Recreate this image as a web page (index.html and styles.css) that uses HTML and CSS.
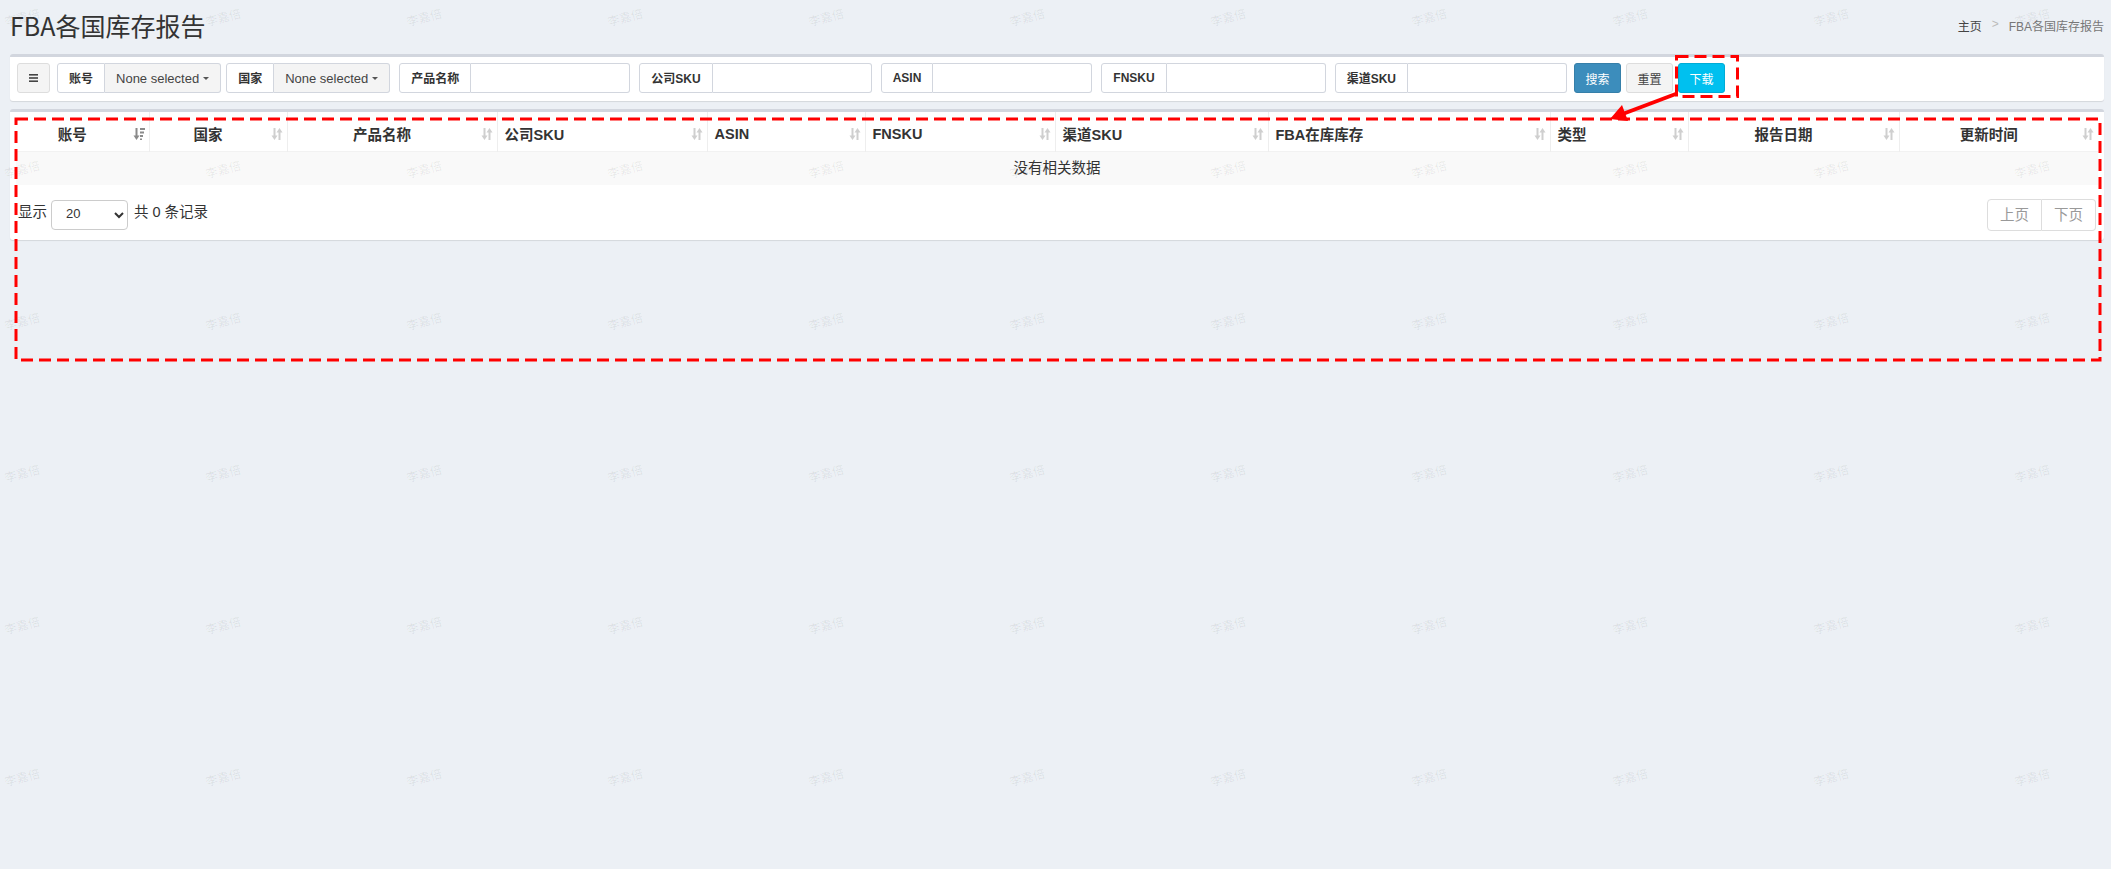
FILE: index.html
```html
<!DOCTYPE html>
<html lang="zh-CN">
<head>
    <meta charset="UTF-8">
    <meta name="viewport" content="width=device-width, initial-scale=1.0">
    <title>FBA各国库存报告</title>
    <link rel="stylesheet" href="styles.css">
</head>
<body>

<svg class="defs" width="0" height="0">
    <symbol id="sort" viewBox="0 0 12 14">
        <rect x="2.5" y="1" width="2" height="8"/>
        <polygon points="0.5,8.5 6.5,8.5 3.5,13"/>
        <polygon points="5.5,5.5 11.5,5.5 8.5,1"/>
        <rect x="7.5" y="5" width="2" height="8"/>
    </symbol>
    <symbol id="sort-desc" viewBox="0 0 12 14">
        <rect x="2.5" y="1" width="2" height="8"/>
        <polygon points="0.5,8.5 6.5,8.5 3.5,13"/>
        <rect x="7" y="1" width="5" height="2"/>
        <rect x="7" y="4.5" width="4" height="2"/>
        <rect x="7" y="8" width="3" height="2"/>
        <rect x="7" y="11.5" width="2" height="1.5"/>
    </symbol>
</svg>

<div class="page-header">
    <h1>FBA各国库存报告</h1>
    <ol class="breadcrumb">
        <li class="home">主页</li>
        <li class="sep">&gt;</li>
        <li>FBA各国库存报告</li>
    </ol>
</div>

<section class="content">
    <div class="box toolbar">
        <button class="btn btn-default btn-menu">
            <svg width="9" height="8" viewBox="0 0 9 8"><rect y="0" width="9" height="1.6"/><rect y="3.2" width="9" height="1.6"/><rect y="6.4" width="9" height="1.6"/></svg>
        </button>
        <div class="input-group">
            <span class="addon">账号</span>
            <button class="dropdown">None selected <span class="caret"></span></button>
        </div>
        <div class="input-group">
            <span class="addon">国家</span>
            <button class="dropdown">None selected <span class="caret"></span></button>
        </div>
        <div class="input-group text">
            <span class="addon">产品名称</span>
            <input type="text">
        </div>
        <div class="input-group text">
            <span class="addon">公司SKU</span>
            <input type="text">
        </div>
        <div class="input-group text">
            <span class="addon">ASIN</span>
            <input type="text">
        </div>
        <div class="input-group text">
            <span class="addon">FNSKU</span>
            <input type="text">
        </div>
        <div class="input-group text">
            <span class="addon">渠道SKU</span>
            <input type="text">
        </div>
        <button class="btn btn-primary">搜索</button>
        <button class="btn btn-default">重置</button>
        <button class="btn btn-info">下载</button>
    </div>

    <div class="box table-box">
        <table class="report">
            <colgroup>
                <col style="width:133px"><col style="width:138px"><col style="width:210px"><col style="width:210px">
                <col style="width:158px"><col style="width:190px"><col style="width:213px"><col style="width:282px">
                <col style="width:138px"><col style="width:211px"><col style="width:199px">
            </colgroup>
            <thead>
                <tr>
                    <th class="center"><div class="th-inner"><span>账号</span><svg class="active"><use href="#sort-desc"/></svg></div></th>
                    <th class="center"><div class="th-inner"><span>国家</span><svg><use href="#sort"/></svg></div></th>
                    <th class="center"><div class="th-inner"><span>产品名称</span><svg><use href="#sort"/></svg></div></th>
                    <th class="left"><div class="th-inner"><span>公司SKU</span><svg><use href="#sort"/></svg></div></th>
                    <th class="left"><div class="th-inner"><span>ASIN</span><svg><use href="#sort"/></svg></div></th>
                    <th class="left"><div class="th-inner"><span>FNSKU</span><svg><use href="#sort"/></svg></div></th>
                    <th class="left"><div class="th-inner"><span>渠道SKU</span><svg><use href="#sort"/></svg></div></th>
                    <th class="left"><div class="th-inner"><span>FBA在库库存</span><svg><use href="#sort"/></svg></div></th>
                    <th class="left"><div class="th-inner"><span>类型</span><svg><use href="#sort"/></svg></div></th>
                    <th class="center"><div class="th-inner"><span>报告日期</span><svg><use href="#sort"/></svg></div></th>
                    <th class="center"><div class="th-inner"><span>更新时间</span><svg><use href="#sort"/></svg></div></th>
                </tr>
            </thead>
            <tbody>
                <tr class="no-records">
                    <td colspan="11">没有相关数据</td>
                </tr>
            </tbody>
        </table>

        <div class="pager">
            <div class="page-size">
                <span>显示</span>
                <select>
                    <option>20</option>
                    <option>50</option>
                    <option>100</option>
                </select>
                <span>共 0 条记录</span>
            </div>
            <div class="pagination">
                <a>上页</a>
                <a>下页</a>
            </div>
        </div>
    </div>
</section>

<div class="watermark"><div class="wm-grid" id="watermark"></div></div>

<svg class="annotate" width="2111" height="400" viewBox="0 0 2111 400">
    <rect x="16" y="119" width="2084" height="241" class="mark"/>
    <rect x="1676.5" y="56.5" width="61" height="40" class="mark"/>
    <line x1="1677" y1="93.5" x2="1624" y2="113.5" class="arrow"/>
    <polygon points="1610,119 1628,121 1622,105" class="head"/>
</svg>

<script>
    // fill the watermark grid
    const wm = document.getElementById('watermark');
    for (let i = 0; i < 11 * 6; i++) {
        const cell = document.createElement('div');
        cell.className = 'wm-cell';
        cell.innerHTML = '<span>李嘉倍</span>';
        wm.appendChild(cell);
    }
</script>

</body>
</html>
```

FILE: styles.css
```css
body {
    margin: 0;
    background-color: #ecf0f5;
    font-family: "Liberation Sans", "Noto Sans CJK SC", sans-serif;
    font-size: 14.5px;
    color: #333;
    min-height: 869px;
    position: relative;
    overflow: hidden;
}
.defs {
    position: absolute;
}

/* header */
.page-header {
    display: flex;
    align-items: center;
    justify-content: space-between;
    height: 50px;
    padding: 0 7px 0 10px;
}
.page-header h1 {
    margin: 0;
    font-family: "Noto Sans CJK SC", sans-serif;
    font-size: 25px;
    font-weight: 400;
    color: #333;
}
.breadcrumb {
    display: flex;
    list-style: none;
    margin: 0;
    padding: 0;
    font-size: 12px;
    color: #777;
}
.breadcrumb .home {
    color: #444;
}
.breadcrumb .sep {
    color: #bbb;
    padding: 0 10px;
}

/* boxes */
.content {
    padding: 4px 7px 0 10px;
}
.box {
    background-color: #fff;
    border-top: 3px solid #d2d6de;
    border-radius: 3px;
    box-shadow: 0 1px 1px rgba(0, 0, 0, 0.1);
}

/* toolbar */
.toolbar {
    display: flex;
    align-items: center;
    gap: 5px;
    padding: 6px 7px 8px;
    margin-bottom: 8px;
}
.btn {
    height: 30px;
    padding: 0 10.5px;
    border: 1px solid #ddd;
    border-radius: 3px;
    font-family: inherit;
    font-size: 12px;
    cursor: pointer;
}
.btn-default {
    background-color: #f4f4f4;
    color: #444;
}
.btn-primary {
    background-color: #3c8dbc;
    border-color: #367fa9;
    color: #fff;
    margin-left: 2px;
}
.btn-info {
    background-color: #00c0ef;
    border-color: #00acd6;
    color: #fff;
}
.btn-menu {
    width: 33px;
    padding: 0;
    display: flex;
    align-items: center;
    justify-content: center;
    margin-right: 2px;
}
.btn-menu svg {
    fill: #444;
}
.input-group {
    display: flex;
    height: 30px;
}
.input-group.text {
    margin-left: 4px;
}
.addon {
    display: flex;
    align-items: center;
    padding: 0 11px 1px;
    border: 1px solid #d2d6de;
    border-radius: 3px 0 0 3px;
    background-color: #fff;
    font-size: 12px;
    font-weight: bold;
    color: #333;
}
.dropdown {
    display: flex;
    align-items: center;
    padding: 0 11px;
    border: 1px solid #d2d6de;
    border-left: 0;
    border-radius: 0 3px 3px 0;
    background-color: #f4f4f4;
    font-family: inherit;
    font-size: 13px;
    color: #444;
}
.caret {
    display: inline-block;
    margin-left: 4px;
    border-top: 3.5px solid #555;
    border-left: 3.5px solid transparent;
    border-right: 3.5px solid transparent;
}
.input-group input {
    width: 159px;
    box-sizing: border-box;
    border: 1px solid #d2d6de;
    border-left: 0;
    border-radius: 0 3px 3px 0;
    padding: 0 10px;
    font-size: 13px;
}

/* table */
.table-box {
    padding: 0 6px;
}
.report {
    width: 100%;
    border-collapse: collapse;
    table-layout: fixed;
}
.report th {
    padding: 0;
    height: 39px;
    font-weight: bold;
    border-left: 1px solid #eee;
}
.report th:first-child {
    border-left: 0;
}
.th-inner {
    display: flex;
    align-items: center;
    padding: 4px 4px 0 8px;
}
.th-inner span {
    flex: 1;
    white-space: nowrap;
}
.center .th-inner span {
    text-align: center;
    padding-right: 12px;
}
.left .th-inner {
    padding-left: 7px;
}
.left .th-inner span {
    text-align: left;
}
.th-inner svg {
    width: 12px;
    height: 14px;
    flex: none;
    fill: #cfcfcf;
}
.th-inner svg.active {
    fill: #8a8a8a;
}
.no-records td {
    height: 33px;
    padding: 0 0 3px;
    box-sizing: border-box;
    background-color: #f9f9f9;
    border-top: 1px solid #f2f2f2;
    text-align: center;
}

/* pager */
.pager {
    display: flex;
    justify-content: space-between;
    align-items: flex-start;
    height: 55px;
    box-sizing: border-box;
    padding: 14px 2px 0 2px;
}
.page-size {
    display: flex;
    align-items: flex-start;
    margin-top: 1px;
}
.page-size span {
    line-height: 24px;
}
.page-size select {
    width: 77px;
    height: 30px;
    margin: 0 6px 0 4px;
    padding: 0 6px 3px 10px;
    border: 1px solid #ccc;
    border-radius: 4px;
    background-color: #fff;
    font-family: inherit;
    font-size: 13px;
    color: #333;
}
.pagination {
    display: flex;
}
.pagination a {
    height: 32px;
    line-height: 30px;
    box-sizing: border-box;
    padding: 0 12px;
    border: 1px solid #ddd;
    color: #999;
}
.pagination a:first-child {
    border-radius: 4px 0 0 4px;
}
.pagination a:last-child {
    border-left: 0;
    border-radius: 0 4px 4px 0;
}

/* watermark layer */
.watermark {
    position: absolute;
    top: 0;
    left: 0;
    width: 2111px;
    height: 869px;
    overflow: hidden;
    pointer-events: none;
    z-index: 1;
}
.wm-grid {
    display: grid;
    grid-template-columns: repeat(11, 201px);
    grid-auto-rows: 152px;
    margin: -60px 0 0 -78px;
}
.wm-cell {
    display: flex;
    align-items: center;
    justify-content: center;
}
.wm-cell span {
    font-family: "Noto Sans CJK SC", sans-serif;
    font-size: 12px;
    color: rgba(0, 0, 0, 0.08);
    transform: rotate(-15deg);
}

/* red annotations */
.annotate {
    position: absolute;
    top: 0;
    left: 0;
    pointer-events: none;
    z-index: 2;
}
.annotate .mark {
    fill: none;
    stroke: #f00;
    stroke-width: 3;
    stroke-dasharray: 12 6;
}
.annotate .arrow {
    stroke: #f00;
    stroke-width: 4;
}
.annotate .head {
    fill: #f00;
}
```
